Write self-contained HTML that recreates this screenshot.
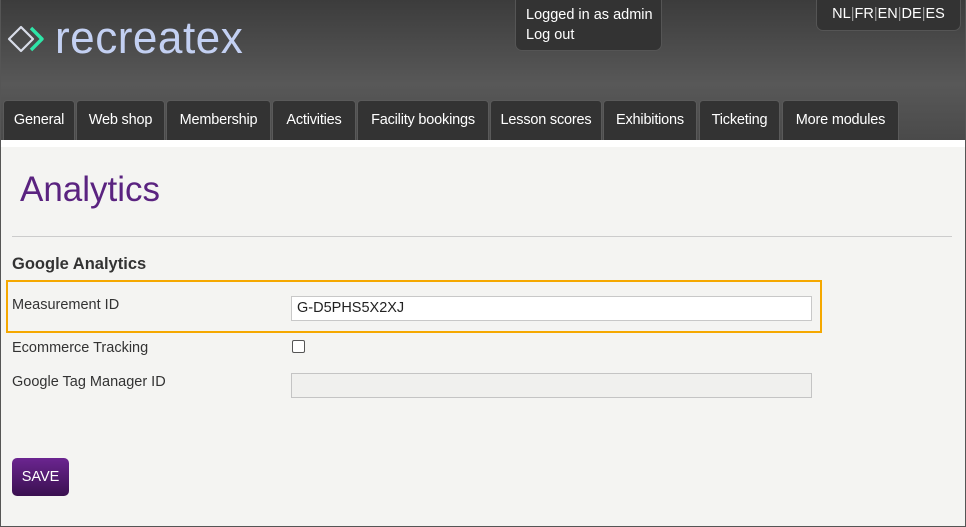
<!DOCTYPE html>
<html><head><meta charset="utf-8"><style>
*{box-sizing:border-box;margin:0;padding:0}
body{width:966px;height:527px;overflow:hidden;font-family:"Liberation Sans",sans-serif;background:#f4f4f2;position:relative}
#frame{position:absolute;left:0;top:0;width:966px;height:527px;border:1px solid #555;border-top:none}
#hdr{position:absolute;left:0;top:0;width:966px;height:140px;background:linear-gradient(#3c3c3c,#585858 60%,#4a4a4a)}
.logo{position:absolute;left:55px;top:12px;font-size:45px;color:#c3d0f2;letter-spacing:0.5px;transform:scaleX(0.98);transform-origin:left}
.box{position:absolute;background:#333;border:1px solid #555;border-top:none;border-radius:0 0 7px 7px;color:#fff;font-size:14.5px}
.tab{position:absolute;top:100px;height:40px;background:#333;border:1px solid #5a5a5a;border-bottom:none;border-radius:4px 4px 0 0;color:#fff;font-size:14.5px;line-height:38px;text-align:center;letter-spacing:-0.2px}
.white{position:absolute;left:1px;top:140px;width:964px;height:7px;background:#fff}
h1{position:absolute;left:20px;top:170px;font-weight:normal;color:#5a2380;font-size:35px}
.hr{position:absolute;left:12px;top:236px;width:940px;height:1px;background:#ccc}
.lbl{position:absolute;left:12px;font-size:14.5px;color:#333}
.inp{position:absolute;left:291px;width:521px;height:25px;border:1px solid #c8c8c8;background:#fff;font-size:14.5px;padding-left:5px;line-height:23px;color:#222}
</style></head><body>
<div id="hdr">
<svg style="position:absolute;left:7px;top:25px" width="40" height="28" viewBox="0 0 40 28">
<path d="M14 2 L26 14 L14 26 L2 14 Z" fill="none" stroke="#d8dce8" stroke-width="2.2" stroke-linejoin="round"/>
<path d="M24 3 L35 14 L24 25" fill="none" stroke="#2ee6a8" stroke-width="3.4" stroke-linejoin="round"/>
</svg>
<div class="logo">recreatex</div>
<div class="box" style="left:515px;top:0;width:147px;height:51px;padding:5px 0 0 10px;line-height:20px">Logged in as admin<br>Log out</div>
<div class="box" style="left:816px;top:0;width:145px;height:31px;padding-top:6px;text-align:center">NL<span style="color:#999">|</span>FR<span style="color:#999">|</span>EN<span style="color:#999">|</span>DE<span style="color:#999">|</span>ES</div>
<div class="tab" style="left:3px;width:72px">General</div>
<div class="tab" style="left:76px;width:89px">Web shop</div>
<div class="tab" style="left:166px;width:105px">Membership</div>
<div class="tab" style="left:272px;width:84px">Activities</div>
<div class="tab" style="left:357px;width:132px">Facility bookings</div>
<div class="tab" style="left:490px;width:112px">Lesson scores</div>
<div class="tab" style="left:603px;width:94px">Exhibitions</div>
<div class="tab" style="left:699px;width:81px">Ticketing</div>
<div class="tab" style="left:782px;width:117px">More modules</div>
</div>
<div class="white"></div>
<h1>Analytics</h1>
<div class="hr"></div>
<div class="lbl" style="top:255px;font-weight:bold;font-size:16.5px">Google Analytics</div>
<div style="position:absolute;left:6px;top:280px;width:816px;height:53px;border:2px solid #f5a800"></div>
<div class="lbl" style="top:297px">Measurement ID</div>
<div class="inp" style="top:296px">G-D5PHS5X2XJ</div>
<div class="lbl" style="top:340px">Ecommerce Tracking</div>
<div style="position:absolute;left:292px;top:340px;width:13px;height:13px;border:1px solid #555;border-radius:2px;background:#fff"></div>
<div class="lbl" style="top:374px">Google Tag Manager ID</div>
<div class="inp" style="top:373px;background:#f0f0ee;border-color:#c4c4c4"></div>
<div style="position:absolute;left:12px;top:458px;width:57px;height:38px;border-radius:5px;background:linear-gradient(#6b2590,#3a1050);color:#fff;font-size:14.5px;line-height:38px;text-align:center">SAVE</div>
<div id="frame"></div>
</body></html>
